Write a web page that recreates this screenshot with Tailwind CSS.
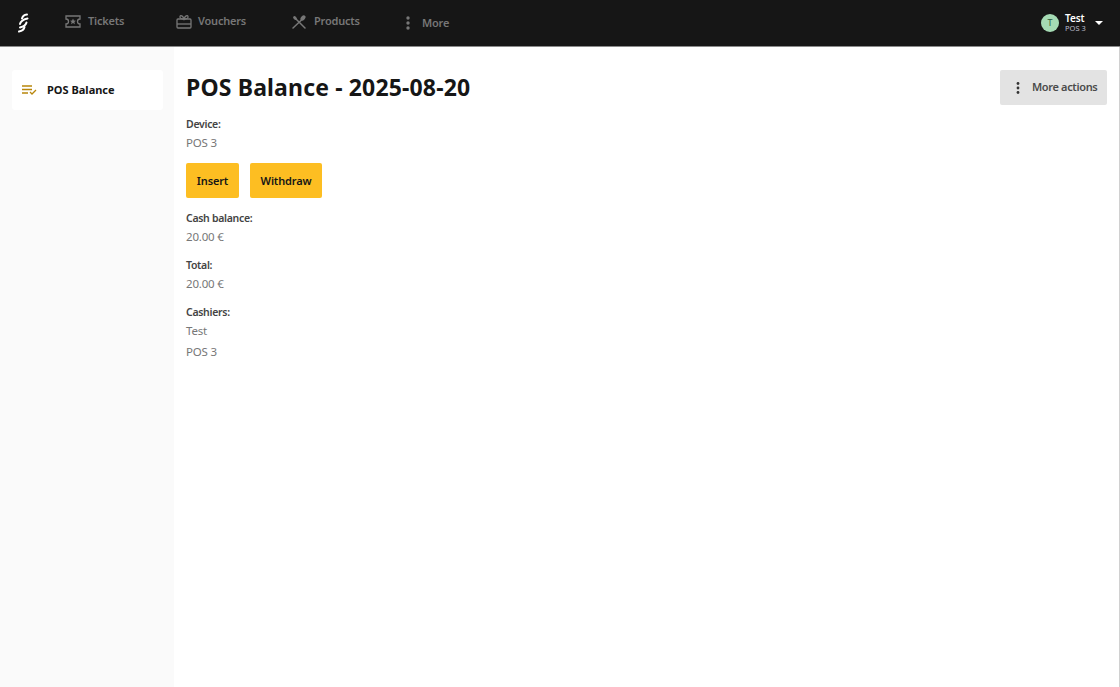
<!DOCTYPE html>
<html lang="en">
<head>
  <meta charset="UTF-8" />
  <title>POS Balance</title>
  <script src="https://cdn.jsdelivr.net/npm/@tailwindcss/browser@4"></script>
</head>
<body class="font-['Noto_Sans',sans-serif] bg-white h-[687px] overflow-hidden flex flex-col">
  <!-- top bar -->
  <header class="h-[47px] bg-[#161616] border-b border-b-[#8a8a8a] flex items-center shrink-0 relative">
    <svg class="ml-[17px] w-[12px] h-[20px]" viewBox="0 0 12 20" fill="none" stroke="#fff" stroke-width="2" stroke-linecap="round">
      <path d="M10 1.500C7.500 1.800 5.500 3.200 5 5.500" />
      <path d="M10.500 5.500C6.500 6.500 3.500 8.500 3 11" />
      <path d="M9.500 9.500C9 12 6.500 13.500 3 14.500" />
      <path d="M7.500 14C7 16.500 5 18 2 18.500" />
    </svg>
    <nav class="flex items-center text-[11px] font-semibold tracking-[-0.2px] text-[#777777]">
      <a class="ml-[36px] flex items-center gap-[7px] -mt-[3px]">
        <svg class="w-[16px] h-[13px]" viewBox="0 0 16 13" fill="none" stroke="#777" stroke-width="1.3"><path d="M1 1h14v3a2.500 2.500 0 0 0 0 5v3H1V9a2.500 2.500 0 0 0 0-5z"/><path d="M8 3.500l.9 2 2.100.2-1.600 1.400.5 2.100L8 8l-1.900 1.200.5-2.100L5 5.700l2.100-.2z" fill="#777" stroke="none"/></svg>
        <span class="w-[36px]">Tickets</span>
      </a>
      <a class="ml-[52px] flex items-center gap-[6px] -mt-[3px]">
        <svg class="w-[16px] h-[15px]" viewBox="0 0 16 15" fill="none" stroke="#777" stroke-width="1.3"><rect x="1" y="5" width="14" height="9" rx="1"/><path d="M1 10h14"/><path d="M8 5C7 2 4.500 .5 4 2.500S6 5 8 5c2 0 4.500-.5 4-2.500S9 2 8 5z"/></svg>
        <span class="w-[46px]">Vouchers</span>
      </a>
      <a class="ml-[48px] flex items-center gap-[8px] -mt-[3px]">
        <svg class="w-[14px] h-[14px]" viewBox="0 0 14 14" fill="#777" stroke="#777" stroke-width="1.500" stroke-linecap="round"><path d="M4 4l9 9" fill="none"/><path d="M9.500 5L1 13" fill="none"/><ellipse cx="3" cy="3" rx="1.500" ry="2.200" transform="rotate(-45 3 3)" stroke="none"/><ellipse cx="11" cy="3" rx="2" ry="3" transform="rotate(45 11 3)" stroke="none"/></svg>
        <span class="w-[45px]">Products</span>
      </a>
      <a class="ml-[47px] flex items-center gap-[12px]">
        <svg class="w-[4px] h-[14px]" viewBox="0 0 4 14" fill="#777"><circle cx="2" cy="2" r="1.700"/><circle cx="2" cy="7" r="1.700"/><circle cx="2" cy="12" r="1.700"/></svg>
        More
      </a>
    </nav>
    <div class="ml-auto mr-[17px] flex items-center">
      <div class="w-[18px] h-[18px] rounded-full bg-[#a5dbb4] text-[#2c5a3c] text-[9px] flex items-center justify-center">T</div>
      <div class="ml-[6px] w-[22px] flex flex-col leading-none">
        <span class="text-[10px] font-semibold tracking-[-0.1px] text-white">Test</span>
        <span class="text-[7.500px] text-[#b9bcc9] mt-[2px]">POS 3</span>
      </div>
      <div class="ml-[8px] w-0 h-0 border-x-[4px] border-x-transparent border-t-[4px] border-t-white"></div>
    </div>
  </header>

  <div class="flex flex-1 min-h-0">
    <!-- sidebar -->
    <aside class="w-[174px] bg-[#fafafa] shrink-0 pl-[12px] pt-[23px]">
      <div class="w-[151px] h-[40px] bg-white rounded-[3px] flex items-center pl-[10px] gap-[10px]">
        <svg class="w-[15px] h-[10px]" viewBox="0 0 15 10" fill="none" stroke="#b8860b" stroke-width="1.300"><path d="M0 1h10M0 4.500h10M0 8h6"/><path d="M8 7l2 2 4-4"/></svg>
        <span class="text-[11px] font-bold text-[#161616]">POS Balance</span>
      </div>
    </aside>

    <!-- content -->
    <main class="flex-1 pl-[12px] pr-[12px] pt-[23px] relative border-r border-r-[#d0d0d0]">
      <div class="flex justify-between items-start">
        <h1 class="text-[23px] font-bold tracking-[0.15px] text-[#161616] leading-[35px]">POS Balance - 2025-08-20</h1>
        <button class="w-[107px] h-[35px] bg-[#e3e3e3] rounded-[2px] flex items-center pl-[16px] gap-[12px] text-[11px] font-semibold tracking-[-0.35px] text-[#4b4b4b]">
          <svg class="w-[4px] h-[12px]" viewBox="0 0 4 12" fill="#333"><circle cx="2" cy="1.500" r="1.400"/><circle cx="2" cy="6" r="1.400"/><circle cx="2" cy="10.500" r="1.400"/></svg>
          More actions
        </button>
      </div>
      <div class="mt-[11px] text-[10.500px] font-semibold tracking-[-0.3px] text-[#444] leading-[16px]">Device:</div>
      <div class="mt-[1px] text-[11.500px] tracking-[-0.2px] text-[#777] leading-[20px]">POS 3</div>
      <div class="mt-[10px] flex gap-[11px]">
        <button class="w-[53px] h-[35px] pt-[1px] bg-[#fdbe22] rounded-[2px] text-[11px] font-semibold tracking-[-0.15px] text-[#161616]">Insert</button>
        <button class="w-[72px] h-[35px] pt-[1px] bg-[#fdbe22] rounded-[2px] text-[11px] font-semibold tracking-[-0.15px] text-[#161616]">Withdraw</button>
      </div>
      <div class="mt-[12px] text-[10.500px] font-semibold tracking-[-0.3px] text-[#444] leading-[16px]">Cash balance:</div>
      <div class="mt-[1px] text-[11.500px] tracking-[-0.2px] text-[#777] leading-[20px]">20.00 €</div>
      <div class="mt-[10px] text-[10.500px] font-semibold tracking-[-0.3px] text-[#444] leading-[16px]">Total:</div>
      <div class="mt-[1px] text-[11.500px] tracking-[-0.2px] text-[#777] leading-[20px]">20.00 €</div>
      <div class="mt-[10px] text-[10.500px] font-semibold tracking-[-0.3px] text-[#444] leading-[16px]">Cashiers:</div>
      <div class="mt-[1px] text-[11.500px] tracking-[-0.2px] text-[#777] leading-[20px]">Test</div>
      <div class="mt-[1px] text-[11.500px] tracking-[-0.2px] text-[#777] leading-[20px]">POS 3</div>
    </main>
  </div>
</body>
</html>
